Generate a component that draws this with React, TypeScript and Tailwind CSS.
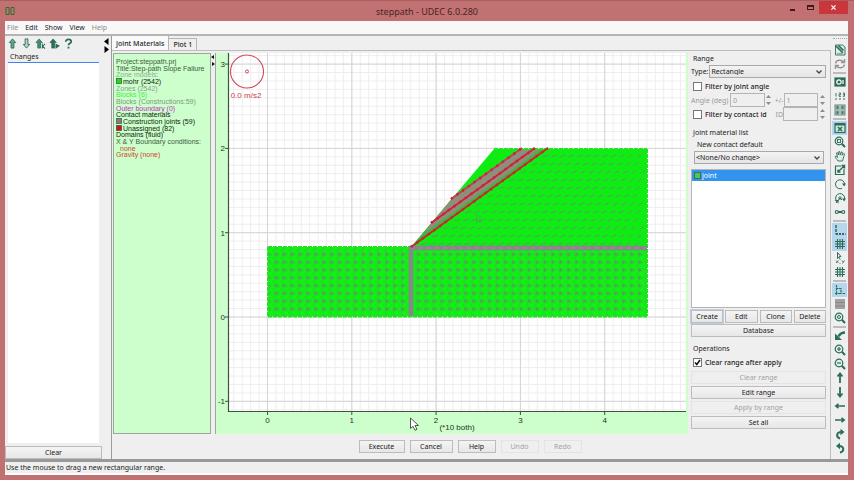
import React from "react";

const GREEN = "#2b6e57";

function Svg({ children, size = 12 }: { children: React.ReactNode; size?: number }) {
  return (
    <svg
      viewBox="0 0 12 12"
      width={size}
      height={size}
      fill="none"
      stroke={GREEN}
      strokeWidth="1.2"
      aria-hidden="true"
    >
      {children}
    </svg>
  );
}

const lens = (
  <>
    <circle cx="5" cy="5" r="3.8" fill="#e3efe9" />
    <path d="M7.8 7.8 11 11" strokeWidth="2" />
  </>
);
const grid = <path d="M1 3.5h10M1 6h10M1 8.5h10M3.5 1v10M6 1v10M8.5 1v10" strokeWidth="1.1" />;

type Tool = { name: string; on?: boolean; icon: React.ReactNode };

const toolGroups: Tool[][] = [
  [
    {
      name: "Edit view",
      icon: (
        <>
          <path d="M1.500 1h7l2.500 2v8h-9.500z" fill="#dfeee8" strokeWidth="0.900" />
          <path d="M2 2l7 7M4.500 1.500l5 5" strokeWidth="1.700" />
          <path d="M3 9.500h5" stroke="#8aa79b" />
        </>
      ),
    },
    {
      name: "Refresh",
      icon: (
        <g stroke="#959595" strokeWidth="1.500">
          <path d="M1.500 5.500C2 2 7 1 9.500 4M10.500 6.500C10 10 5 11 2.500 8" />
          <path d="M10.500 1v3.500h-3.500M1.500 11V7.500H5" />
        </g>
      ),
    },
  ],
  [
    {
      name: "Camera",
      icon: (
        <>
          <rect x="1" y="2" width="10" height="8" fill={GREEN} />
          <circle cx="5" cy="6" r="2.200" stroke="#fff" />
          <path d="M9 4v4" stroke="#fff" />
        </>
      ),
    },
    {
      name: "Numbering",
      icon: (
        <>
          <path
            d="M2 3v3.500M4.800 3h1.700v1.700H5v1.600h2M8.800 3h1.700v3.300H8.800M9 4.700h1.500"
            strokeWidth="0.900"
          />
          <path d="M1 9h2M5 9h2M9 9h2" />
        </>
      ),
    },
    {
      name: "Tiles",
      icon: (
        <>
          <rect x="1" y="1" width="10" height="10" fill="#83a597" stroke="#829b90" />
          <path d="M1 6h10M6 1v10" stroke="#b4ccc1" />
          <path d="M3.500 2.500v2M8.500 2.500v2M3.500 7.500v2M8.500 7.500v2" />
        </>
      ),
    },
  ],
  [
    {
      name: "Fit to window",
      on: true,
      icon: (
        <>
          <rect x="1" y="1.500" width="10" height="9" fill="#cfe5dc" />
          <path d="M1 2.500h10" strokeWidth="2" />
          <path d="M4 5l4 4M8 5 4 9" strokeWidth="1.500" />
        </>
      ),
    },
    {
      name: "Zoom box",
      icon: (
        <>
          {lens}
          <rect x="3.500" y="3.500" width="3" height="3" strokeWidth="0.900" />
        </>
      ),
    },
    {
      name: "Pan",
      icon: (
        <path
          d="M4 11C3 9 1 8 1.200 6.500 2 6 3 7 3.500 7.500L2.500 3C3 2 4 2.500 4.500 5L4.800 1.500C5.500 1 6 1.500 6.200 5L7.500 1.800C8.200 1.500 8.800 2 8 5.200L9.800 3.500C10.800 3.500 10.500 4.500 9.800 6.500L8.500 11z"
          fill="#e0ece6"
          strokeWidth="0.900"
        />
      ),
    },
    {
      name: "Resize",
      icon: (
        <>
          <path d="M7 2H1.500v8.500H10V5" />
          <path d="M4.500 7.500 10.500 1.500M7.500 1.500h3v3M4 5.500V8h2.500" strokeWidth="1.400" />
        </>
      ),
    },
    {
      name: "Rotate",
      icon: (
        <>
          <path d="M8 10.300A4.500 4.500 0 1 1 10.500 6" strokeWidth="1" />
          <path d="M8 5.500h4L10.200 8.500z" fill={GREEN} stroke="none" />
        </>
      ),
    },
    {
      name: "Spin",
      icon: (
        <>
          <path d="M2 8A4.500 4.500 0 1 1 10.500 7M2 11l4-5 2 2" strokeWidth="1" />
          <path d="M8 6.500h4L10.200 9.500zM0.500 8h4v3.500z" fill={GREEN} stroke="none" />
          <circle cx="6" cy="6" r="1.200" strokeWidth="0.900" />
        </>
      ),
    },
    {
      name: "Link",
      icon: (
        <>
          <circle cx="2.800" cy="6" r="1.500" />
          <circle cx="9.200" cy="6" r="1.500" />
          <path d="M4 6h4" strokeWidth="2" />
        </>
      ),
    },
  ],
  [
    {
      name: "Axes",
      on: true,
      icon: (
        <>
          <path d="M2 1v9.500" strokeWidth="1.500" strokeDasharray="3 1" />
          <path d="M2 10h9.500" strokeWidth="2" strokeDasharray="2 1" />
        </>
      ),
    },
    { name: "Grid", on: true, icon: grid },
    {
      name: "Coordinates",
      icon: (
        <>
          <path d="M3.500 0.500v6l1.500-1.300 1.200 2.300M3.500 0.500l3.500 4H5" strokeWidth="1" />
          <path d="M2 8.500l2.500 2.500M4.500 8.500 2 11M8 8.500l1 1.500M10.500 8.500 8.500 11.500M6 11v.800" strokeWidth="0.900" />
        </>
      ),
    },
    { name: "Snap", icon: grid },
  ],
  [
    {
      name: "Origin",
      on: true,
      icon: (
        <path d="M2.500 1v10M1 9.500h6M2 4.500h5V10M8.500 9.500h3" strokeWidth="1.200" strokeDasharray="2.500 .6" />
      ),
    },
    {
      name: "Layers",
      icon: (
        <>
          <rect x="1" y="1" width="10" height="10" fill="#a2a2a2" stroke="none" />
          <path d="M1 4.500h10M1 8h10" stroke="#828282" strokeWidth="0.800" />
        </>
      ),
    },
    {
      name: "Inspect",
      icon: (
        <>
          {lens}
          <circle cx="5" cy="5" r="1.500" strokeWidth="1" />
        </>
      ),
    },
  ],
  [
    {
      name: "Previous view",
      icon: (
        <>
          <path d="M11 2.500C8 2.500 6 3.500 4.500 6.500" strokeWidth="2.400" />
          <path d="M1 3.500V10h7z" fill={GREEN} stroke="none" />
        </>
      ),
    },
    {
      name: "Zoom in",
      icon: (
        <>
          {lens}
          <path d="M3 5h4M5 3v4" />
        </>
      ),
    },
    {
      name: "Zoom out",
      icon: (
        <>
          {lens}
          <path d="M3 5h4" />
        </>
      ),
    },
    { name: "Move up", icon: <path d="M6 11V2M3.500 4.500 6 1.500 8.500 4.500" strokeWidth="1.800" /> },
    { name: "Move down", icon: <path d="M6 1v9M3.500 7.500 6 10.500 8.500 7.500" strokeWidth="1.800" /> },
    { name: "Move left", icon: <path d="M11 6H2M4.500 3.800 1.800 6 4.500 8.200" strokeWidth="1.600" /> },
    { name: "Move right", icon: <path d="M1 6h9M7.500 3.800 10.200 6 7.500 8.200" strokeWidth="1.600" /> },
    {
      name: "Turn right",
      icon: (
        <>
          <path d="M6 10.500C2 9.500 2 4 7.500 4" strokeWidth="2" />
          <path d="M6.500 0.800v6.400L10.500 4z" fill={GREEN} stroke="none" />
        </>
      ),
    },
    {
      name: "Turn left",
      icon: (
        <>
          <path d="M6 10.500C10.500 9.500 10.500 4 5 4" strokeWidth="2" />
          <path d="M6 0.800v6.400L2 4z" fill={GREEN} stroke="none" />
        </>
      ),
    },
  ],
];

const leftTools: Tool[] = [
  {
    name: "Up",
    icon: <path d="M4.500 11V5H2.500L6 1l3.500 4h-2v6z" fill="#62a98e" strokeWidth="1" />,
  },
  { name: "Down", icon: <path d="M4.500 1v6H2.500L6 11l3.500-4h-2V1z" fill="#b9d3c8" strokeWidth="1" /> },
  {
    name: "Up to key",
    icon: (
      <>
        <path d="M3 11V5H1L4.500 1 8 5H6v6z" fill="#3f8f72" strokeWidth="0.800" />
        <path d="M8 6v5.500M11 6.500 8.500 9l2.500 2.500" strokeWidth="1.100" />
      </>
    ),
  },
  {
    name: "Up to end",
    icon: (
      <>
        <path d="M3 11V5H1L4.500 1 8 5H6v6z" fill={GREEN} strokeWidth="0.800" />
        <path d="M7 6v6l5-3.500z" fill={GREEN} stroke="none" />
      </>
    ),
  },
  {
    name: "Help",
    icon: (
      <>
        <path d="M3 4C3 0.500 9.500 1 9 4 8.800 5.800 6 5.800 6 8" strokeWidth="1.900" />
        <path d="M6 9.500v2" strokeWidth="2" />
      </>
    ),
  },
];

const legend: { text: string; cls: string; swatch?: string }[] = [
  { text: "Project:steppath.prj", cls: "text-[#3c5a3c]" },
  { text: "Title:Step-path Slope Failure", cls: "text-[#3c5a3c]" },
  { text: "Zone models:", cls: "text-[#8fae8f]" },
  { text: "mohr (2542)", cls: "text-[#0c1c0c]", swatch: "fill-[#16e016]" },
  { text: "Zones (2542)", cls: "text-[#8aa08a]" },
  { text: "Blocks (6)", cls: "text-[#3cf03c]" },
  { text: "Blocks (Constructions:59)", cls: "text-[#7e987e]" },
  { text: "Outer boundary (0)", cls: "text-[#c22fc2]" },
  { text: "Contact materials", cls: "text-[#0c1c0c]" },
  { text: "Construction joints (59)", cls: "text-[#0c1c0c]", swatch: "fill-[#808080]" },
  { text: "Unassigned (82)", cls: "text-[#0c1c0c]", swatch: "fill-[#d01020]" },
  { text: "Domains (fluid)", cls: "text-[#0c1c0c]" },
  { text: "X & Y Boundary conditions:", cls: "text-[#3c5a3c]" },
  { text: "none", cls: "pl-1 text-[#d0452c]" },
  { text: "Gravity (none)", cls: "text-[#d0452c]" },
];

const UNIT = 84.3;
const X0 = 267.5;
const Y0 = 317;
const range = (from: number, to: number) => Array.from({ length: to - from + 1 }, (_, i) => from + i);

function Plot() {
  const dashes: string[] = [];
  for (let row = 0; row < 12; row++) {
    const y = 156 + row * 8;
    const left = 411 + (247 - y) * 1.38 + 9;
    for (let x = left; x < 643; x += 8.5) {
      const steep = (x - 411) / 236;
      const dx = 3.4 - steep * 1.2;
      const dy = 0.8 + steep * 0.6;
      dashes.push(`M${(x - dx).toFixed(1)} ${(y + dy).toFixed(1)}L${(x + dx).toFixed(1)} ${(y - dy).toFixed(1)}`);
    }
  }
  return (
    <svg
      viewBox="216 53 470 381"
      preserveAspectRatio="xMinYMin meet"
      className="block h-full w-full font-['Liberation_Sans',Arial,sans-serif] text-[8px]"
      role="img"
      aria-label="Slope model plot"
    >
      <defs>
        <pattern id="mesh" x="270.500" y="250.500" width="7.900" height="7.800" patternUnits="userSpaceOnUse">
          <rect width="7.900" height="7.800" fill="#16e61b" />
          <path d="M0 0 7.900 7.800M0 7.800 7.900 0" stroke="#0dfa10" strokeWidth="1" />
          <path d="M3.500 3.900h4M5.500 1.900v4" stroke="#5d9a5f" strokeWidth="1.400" />
        </pattern>
        <clipPath id="paper">
          <rect x="229" y="53" width="457" height="358" />
        </clipPath>
        <clipPath id="slope">
          <path d="M411 247 494 149H647V247z" />
        </clipPath>
      </defs>
      <rect x="229" y="53" width="457" height="358.500" fill="#fff" />
      <g clipPath="url(#paper)">
        <path
          d={
            range(-5, 50).map((i) => `M${X0 + (i * UNIT) / 10} 53V411`).join("") +
            range(-12, 31).map((i) => `M229 ${Y0 - (i * UNIT) / 10}H686`).join("")
          }
          stroke="#eeeef0"
        />
        <path
          d={
            range(0, 4).map((i) => `M${X0 + i * UNIT} 53V411`).join("") +
            range(-1, 3).map((i) => `M229 ${Y0 - i * UNIT}H686`).join("")
          }
          stroke="#d4d4d7"
        />
      </g>
      <rect x="268" y="247" width="379" height="69.500" fill="url(#mesh)" />
      <path d="M411 247 494 149H647V247z" fill="#0fec14" />
      <g clipPath="url(#slope)">
        <path d={dashes.join("")} stroke="#55a558" strokeWidth="1.100" />
        <path d="M451 199 522 148H548L411 247z" fill="#3fb53f" />
        <path d="M451 199 522 148H535L431 223z" fill="#8b8f7c" />
        <path d="M431 223 535 148 541 149 425 233z" fill="#8b8f7c" />
        <path d="M477 214v9M480 216v7M476 221h6" stroke="#55a055" strokeWidth="0.800" />
      </g>
      <path
        d="M268 247H411M268 316.500H647M268 247v69M647 149v167M494 149h153"
        fill="none"
        stroke="#1ee51e"
        strokeWidth="2"
        strokeDasharray="4 1"
      />
      <path d="M411 316V248H647" fill="none" stroke="#8b858b" strokeWidth="4.500" />
      <path d="M411 248H647" stroke="#a08aa0" strokeWidth="1" strokeDasharray="4 4" />
      <g strokeWidth="1.800" stroke="#d6202a">
        <path d="M451 199 522 148" stroke="#c93a52" />
        <path d="M431 223 535 148" />
        <path d="M411 247 548 148" />
      </g>
      <g strokeWidth="2.600" strokeDasharray="2 5" stroke="#cf2040">
        <path d="M451 199 522 148" />
        <path d="M431 223 535 148" />
        <path d="M411 247 548 148" />
      </g>
      <path d="M228.500 53V411.500H686" fill="none" stroke="#3d533d" strokeWidth="1.200" />
      <g stroke="#3d533d">
        {range(0, 4).map((i) => (
          <path key={i} d={`M${X0 + i * UNIT} 411v4`} />
        ))}
        {range(-1, 3).map((i) => (
          <path key={i} d={`M225 ${Y0 - i * UNIT}h4`} />
        ))}
      </g>
      <g fill="#1d331d">
        {range(0, 4).map((i) => (
          <text key={i} x={X0 + i * UNIT} y="423" textAnchor="middle">
            {i}
          </text>
        ))}
        {range(-1, 3).map((i) => (
          <text key={i} x="225" y={Y0 + 3 - i * UNIT} textAnchor="end">
            {i}
          </text>
        ))}
        <text x="457" y="430" textAnchor="middle">
          (*10 both)
        </text>
      </g>
      <g fill="none" stroke="#cf4a58">
        <circle cx="247" cy="71.500" r="16.500" strokeWidth="1.100" />
        <circle cx="247" cy="71.500" r="1.500" />
        <text x="246" y="98" textAnchor="middle" fill="#cf3b4b" stroke="none">
          0.0 m/s2
        </text>
      </g>
      <path d="M410.500 418v10.500l2.500-2.200 2 4 2-1-2-3.800h3.500z" fill="#fff" stroke="#444" strokeWidth="0.900" />
    </svg>
  );
}

const field = "border border-[#b4b4b4] bg-[#efefef]";
const button =
  "h-[13px] border border-[#bcbcbc] bg-linear-to-b from-[#f4f4f4] to-[#e7e7e7] text-center leading-none text-[#1a1a1a] disabled:border-[#e4e4e4] disabled:bg-none disabled:text-[#a2a2a2]";

function Choice({ id, value }: { id: string; value: string }) {
  return (
    <div className="relative min-w-0 flex-1">
      <select
        id={id}
        defaultValue={value}
        className="block h-[13px] w-full appearance-none border border-[#a9a9a9] bg-linear-to-b from-[#f3f3f3] to-[#e5e5e5] px-px leading-none"
      >
        <option>{value}</option>
      </select>
      <svg
        viewBox="0 0 6 4"
        className="pointer-events-none absolute top-[5px] right-1 h-1 w-1.5"
        fill="none"
        stroke="#444"
        strokeWidth="1.300"
      >
        <path d="M.500.500 3 3 5.500.500" />
      </svg>
    </div>
  );
}

function Spinner({ name }: { name: string }) {
  return (
    <span className="flex w-2 flex-col items-center justify-center gap-1">
      <button aria-label={`Increase ${name}`} className="block">
        <svg viewBox="0 0 5 3" className="block h-[3px] w-[5px]" fill="#8c8c8c">
          <path d="M0 3 2.500 0 5 3z" />
        </svg>
      </button>
      <button aria-label={`Decrease ${name}`} className="block">
        <svg viewBox="0 0 5 3" className="block h-[3px] w-[5px]" fill="#8c8c8c">
          <path d="M0 0h5L2.500 3z" />
        </svg>
      </button>
    </span>
  );
}

function Check({ label, checked }: { label: string; checked?: boolean }) {
  return (
    <label className="flex items-center gap-[3px] font-medium whitespace-nowrap">
      <span className="relative block h-[9px] w-[9px]">
        <input
          type="checkbox"
          defaultChecked={checked}
          className="peer block h-[9px] w-[9px] appearance-none border border-[#777] bg-white"
        />
        <svg
          viewBox="0 0 9 9"
          className="pointer-events-none absolute inset-0 hidden h-[9px] w-[9px] peer-checked:block"
          fill="none"
          stroke="#111"
          strokeWidth="1.500"
        >
          <path d="M2 4.500 3.800 6.500 7 2" />
        </svg>
      </span>
      {label}
    </label>
  );
}

function RangePanel() {
  return (
    <aside className="mt-3.5 flex w-[143px] shrink-0 flex-col border-t border-r border-[#bdbdbd] pt-px pr-1 pl-[3px]">
      <h2 className="ml-0.5 flex h-[13px] items-center">Range</h2>
      <div className="flex h-[13px] items-center gap-px">
        <label htmlFor="type">Type:</label>
        <Choice id="type" value="Rectangle" />
      </div>
      <div className="mt-px flex h-3.5 items-center pl-0.5">
        <Check label="Filter by joint angle" />
      </div>
      <div className="flex h-3.5 text-[#9a9a9a]">
        <label htmlFor="angle" className="flex w-[39px] items-center overflow-hidden whitespace-nowrap">
          Angle (deg)
        </label>
        <input id="angle" defaultValue="0" className={`min-w-0 flex-1 px-0.5 ${field}`} />
        <Spinner name="angle" />
        <label htmlFor="tolerance" className="flex w-[11px] items-center justify-end">
          +/-
        </label>
        <input id="tolerance" defaultValue="1" className={`min-w-0 flex-1 px-0.5 ${field}`} />
        <Spinner name="tolerance" />
      </div>
      <div className="flex h-3.5 items-center pl-0.5">
        <Check label="Filter by contact id" />
        <label htmlFor="contact" className="ml-auto text-[#9a9a9a]">
          ID
        </label>
        <input id="contact" className={`h-3.5 w-[35px] ${field}`} />
        <Spinner name="contact id" />
      </div>
      <h2 className="mt-[5px] ml-0.5 flex h-3 items-center">Joint material list</h2>
      <label htmlFor="default-contact" className="ml-1.5 flex h-3 items-center">
        New contact default
      </label>
      <div className="mt-px mr-0.5 ml-[3px] flex">
        <Choice id="default-contact" value="<None/No change>" />
      </div>
      <ul className="mt-[5px] min-h-0 flex-1 border border-[#b5b5b5] bg-white">
        <li className="flex h-[11px] items-center gap-px bg-[#3294ee] pl-0.5 text-white">
          <span className="h-[7px] w-[7px] border border-[#2c7d4a] bg-[#5fba5c]" />
          joint
        </li>
      </ul>
      <div className="mt-0.5 grid grid-cols-4 gap-0.5">
        <button className={`${button} border-[#6f9cc8] outline outline-[#b9d2ea]`}>Create</button>
        <button className={button}>Edit</button>
        <button className={button}>Clone</button>
        <button className={button}>Delete</button>
      </div>
      <button className={`mt-px ${button}`}>Database</button>
      <h2 className="mt-[5px] ml-0.5 flex h-3 items-center">Operations</h2>
      <div className="mt-px flex h-3.5 items-center pl-0.5">
        <Check label="Clear range after apply" checked />
      </div>
      <div className="mt-0.5 mb-[30px] flex flex-col gap-0.5">
        <button disabled className={button}>
          Clear range
        </button>
        <button className={button}>Edit range</button>
        <button disabled className={button}>
          Apply by range
        </button>
        <button className={button}>Set all</button>
      </div>
    </aside>
  );
}

export default function App() {
  return (
    <div className="flex h-screen flex-col overflow-hidden border-t border-[#a75f5f] bg-[#c17171] pr-1.5 pb-[5px] pl-[5px] font-['Noto_Sans','Open_Sans',sans-serif] text-[7px] leading-none text-[#222]">
      <header className="flex h-5 shrink-0 items-center">
        <svg viewBox="0 0 10 8" className="h-2 w-2.5" fill="#8f9362" stroke="#475c38">
          <path d="M1 .500h3v7H1zM6 .500h3v7H6z" />
        </svg>
        <h1 className="flex-1 pl-14 text-center text-[9px] text-[#4b2424]">steppath - UDEC 6.0.280</h1>
        <div className="flex h-full items-start">
          <button aria-label="Minimize" className="flex h-[13px] w-[18px] items-center justify-center">
            <span className="mt-1 h-0.5 w-[5px] bg-[#43191b]" />
          </button>
          <button aria-label="Maximize" className="flex h-[13px] w-[18px] items-center justify-center">
            <span className="h-[5px] w-[7px] border border-t-2 border-[#43191b]" />
          </button>
          <button aria-label="Close" className="flex h-[13px] w-[29px] items-center justify-center bg-[#c9373d]">
            <svg viewBox="0 0 6 6" className="h-[5px] w-[5px]" stroke="#fff" strokeWidth="1.400">
              <path d="M.500.500l5 5M5.500.500l-5 5" />
            </svg>
          </button>
        </div>
      </header>

      <nav className="flex h-[13px] shrink-0 items-center gap-[7px] bg-[#f8f8f8] pl-0.5">
        <button className="text-[#8b8b8b]">File</button>
        <button>Edit</button>
        <button>Show</button>
        <button>View</button>
        <button className="text-[#8b8b8b]">Help</button>
      </nav>

      <div className="flex min-h-0 flex-1 border-t-2 border-[#b4b4b4] bg-[#efefef]">
        <section className="flex w-[97px] shrink-0 flex-col">
          <div className="flex h-3.5 shrink-0 items-center gap-0.5 pl-px">
            {leftTools.map((t) => (
              <button key={t.name} aria-label={t.name} className="flex w-3 justify-center">
                <Svg size={11}>{t.icon}</Svg>
              </button>
            ))}
          </div>
          <h2 className="mx-[3px] flex h-[13px] shrink-0 items-center border-b border-[#3d86f2] pl-0.5">
            Changes
          </h2>
          <div className="mx-[3px] flex-1 bg-white" />
          <button className={`mt-[3px] ${button}`}>Clear</button>
        </section>

        <div className="w-2.5 shrink-0 border-r border-[#9b9b9b] pt-0.5 pl-0.5">
          <svg viewBox="0 0 5 15" className="h-[15px] w-[5px]" fill="#000">
            <path d="M4.500 0v7L0 3.500zM.500 8v7L5 11.500z" />
          </svg>
        </div>

        <main className="flex min-w-0 flex-1 flex-col">
          <div className="flex h-3.5 shrink-0 items-end" role="tablist">
            <button
              role="tab"
              aria-selected="true"
              className="h-3.5 border-r border-[#b5b5b5] bg-[#f9f9f9] px-1 font-medium"
            >
              Joint Materials
            </button>
            <button role="tab" aria-selected="false" className="h-3 border-t border-r border-[#b5b5b5] px-1 font-medium">
              Plot 1
            </button>
          </div>
          <div className="flex min-h-0 flex-1 flex-col border-t border-[#bdbdbd]">
            <div className="mt-0.5 flex min-h-0 flex-1 pl-px">
              <div className="w-[98px] shrink-0 border border-[#9aa79a] bg-[#ccffcc] pt-1 pl-0.5 font-['Liberation_Sans',Arial,sans-serif]">
                <ul className="grid h-[100px] auto-rows-fr">
                  {legend.map((l) => (
                    <li key={l.text} className={`flex min-h-0 items-center whitespace-nowrap ${l.cls}`}>
                      {l.swatch && (
                        <svg viewBox="0 0 6 6" className={`mr-px h-1.5 w-1.5 ${l.swatch}`} aria-hidden="true">
                          <rect x="0.500" y="0.500" width="5" height="5" stroke="#456045" strokeWidth="0.800" />
                        </svg>
                      )}
                      {l.text}
                    </li>
                  ))}
                </ul>
              </div>
              <div className="w-1 shrink-0 pt-0.5">
                <svg viewBox="0 0 4 11" className="h-[11px] w-1" fill="#111">
                  <path d="M3 0v4L0 2zM1 7v4l3-2z" />
                </svg>
              </div>
              <div className="min-w-0 flex-1 border-l border-[#9aa79a] bg-[#ccffcc]">
                <Plot />
              </div>
            </div>
            <div className="flex h-[25px] shrink-0 items-center justify-center gap-[5px] pl-35">
              <button className={`w-[46px] ${button}`}>Execute</button>
              <button className={`w-[43px] ${button}`}>Cancel</button>
              <button className={`w-[38px] ${button}`}>Help</button>
              <button disabled className={`w-[38px] ${button}`}>
                Undo
              </button>
              <button disabled className={`w-[38px] ${button}`}>
                Redo
              </button>
            </div>
          </div>
        </main>

        <RangePanel />

        <div className="flex w-[17px] shrink-0 flex-col items-center pt-0.5">
          <span className="mb-1 w-3.5 border-t border-dotted border-[#aaa]" />
          {toolGroups.map((group, g) => (
            <React.Fragment key={g}>
              {g > 0 && <span className="my-px h-0.5 w-[13px] shrink-0 bg-[#bcbcbc]" />}
              {group.map((t) => (
                <button
                  key={t.name}
                  aria-label={t.name}
                  aria-pressed={!!t.on}
                  className="flex h-3.5 w-[15px] shrink-0 items-center justify-center aria-pressed:bg-[#b5d6ee]"
                >
                  <Svg size={12}>{t.icon}</Svg>
                </button>
              ))}
            </React.Fragment>
          ))}
        </div>
      </div>

      <footer className="flex h-4 shrink-0 items-center border-t-[3px] border-b-2 border-[#999] border-b-white bg-[#efefef] pl-px">
        Use the mouse to drag a new rectangular range.
      </footer>
    </div>
  );
}
